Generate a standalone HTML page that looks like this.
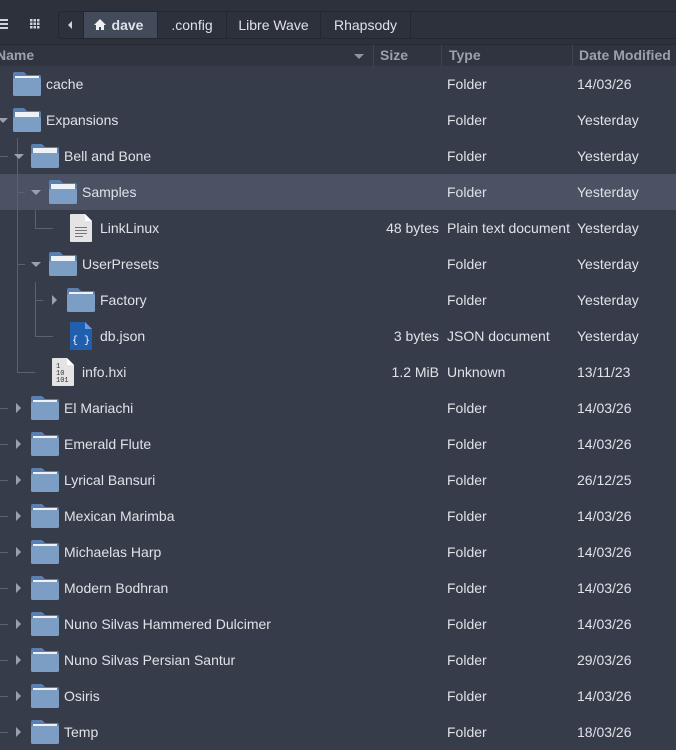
<!DOCTYPE html>
<html><head><meta charset="utf-8"><style>
*{margin:0;padding:0;box-sizing:border-box}
body{width:676px;height:748px;overflow:hidden;background:#373c4a;font-family:"Liberation Sans","DejaVu Sans",sans-serif;font-size:14px;color:#dfe2e8;position:relative}
.top{position:absolute;left:0;top:0;width:676px;height:44px;background:#2d313b}
.crumb{position:absolute;left:58px;top:11px;width:630px;height:28px;border:1px solid #232730;border-radius:4px;background:#2d313b}
.seg{position:absolute;top:0;height:26px;line-height:26px;border-right:1px solid #23272f;text-align:center;color:#dfe2e8}
.hdr{position:absolute;left:0;top:44px;width:676px;height:22px;background:#2f3440;border-top:1px solid #262a33;color:#9aa1ad;font-weight:bold;font-size:14px}
.hdr span{position:absolute;top:2px}
.hs{position:absolute;top:0;width:1px;height:22px;background:#3e4450}
.row{position:absolute;left:0;width:676px;height:36px}
.sel{background:#4a5264}
.t{position:absolute;top:10px;white-space:nowrap}
.f{position:absolute;top:6px}
.ty{left:447px}.dt{left:577px}
.sz{right:237px;text-align:right}
.ln{position:absolute;background:#5b6170}
.chd{position:absolute;top:16px;width:0;height:0;border-left:5px solid transparent;border-right:5px solid transparent;border-top:5px solid #9aa1ad}
.chr{position:absolute;top:13px;width:0;height:0;border-top:5px solid transparent;border-bottom:5px solid transparent;border-left:5px solid #9aa1ad}
</style></head><body>
<svg width="0" height="0" style="position:absolute"><defs>
<symbol id="fc" viewBox="0 0 28 24"><path d="M0 2a2 2 0 0 1 2-2h9l3 3h12a2 2 0 0 1 2 2v4H0z" fill="#5b80b0"/><rect x="2" y="4" width="24" height="3" fill="#eef1f5"/><rect x="0" y="6" width="28" height="18" rx="1.5" fill="#7c9dc4"/></symbol>
<symbol id="fo" viewBox="0 0 28 24"><path d="M0 2a2 2 0 0 1 2-2h9l3 3h12a2 2 0 0 1 2 2v6H0z" fill="#5b80b0"/><rect x="2" y="4" width="24" height="7" fill="#eef1f5"/><rect x="0" y="9" width="28" height="15" rx="1.5" fill="#7c9dc4"/></symbol>
</defs></svg>
<div class="top">
<div style="position:absolute;left:0;top:19px;width:8px;height:2px;background:#cfd3da;box-shadow:0 4px #cfd3da,0 8px #cfd3da"></div>
<svg style="position:absolute;left:30px;top:19px" width="10" height="10"><g fill="#cfd3da"><rect x="0" y="0" width="2.5" height="2.5"/><rect x="3.5" y="0" width="2.5" height="2.5"/><rect x="7" y="0" width="2.5" height="2.5"/><rect x="0" y="3.5" width="2.5" height="2.5"/><rect x="3.5" y="3.5" width="2.5" height="2.5"/><rect x="7" y="3.5" width="2.5" height="2.5"/><rect x="0" y="7" width="2.5" height="2.5"/><rect x="3.5" y="7" width="2.5" height="2.5"/><rect x="7" y="7" width="2.5" height="2.5"/></g></svg>
<div class="crumb">
<div class="seg" style="left:0;width:25px"><div style="position:absolute;left:9px;top:9px;border-top:4px solid transparent;border-bottom:4px solid transparent;border-right:4px solid #cfd3da"></div></div>
<div class="seg" style="left:25px;width:74px;background:#434a5a;font-weight:bold;padding-left:14px">dave<svg style="position:absolute;left:10px;top:7px" width="12" height="11"><path d="M6 0L0 6h2v5h3V8h2v3h3V6h2z" fill="#eef0f3"/></svg></div>
<div class="seg" style="left:99px;width:69px">.config</div>
<div class="seg" style="left:168px;width:94px">Libre Wave</div>
<div class="seg" style="left:262px;width:90px">Rhapsody</div>
</div>
</div>
<div class="hdr">
<span style="left:-4px">Name</span>
<div style="position:absolute;left:354px;top:9px;border-left:5px solid transparent;border-right:5px solid transparent;border-top:5px solid #8e95a1"></div>
<div class="hs" style="left:373px"></div><span style="left:380px">Size</span>
<div class="hs" style="left:441px"></div><span style="left:449px">Type</span>
<div class="hs" style="left:572px"></div><span style="left:579px">Date Modified</span>
</div>

<div class="ln" style="left:17px;top:138px;width:1px;height:234px"></div>
<div class="ln" style="left:17px;top:192px;width:8px;height:1px"></div>
<div class="ln" style="left:17px;top:264px;width:8px;height:1px"></div>
<div class="ln" style="left:17px;top:372px;width:18px;height:1px"></div>
<div class="ln" style="left:35px;top:210px;width:1px;height:18px"></div>
<div class="ln" style="left:35px;top:228px;width:18px;height:1px"></div>
<div class="ln" style="left:35px;top:282px;width:1px;height:54px"></div>
<div class="ln" style="left:35px;top:300px;width:8px;height:1px"></div>
<div class="ln" style="left:35px;top:336px;width:18px;height:1px"></div>

<div class="row" style="top:66px"><svg class="f" style="left:13px" width="28" height="24"><use href="#fc"/></svg><span class="t" style="left:46px">cache</span><span class="t ty">Folder</span><span class="t dt">14/03/26</span></div>
<div class="row" style="top:102px"><div class="chd" style="left:-2px"></div><svg class="f" style="left:13px" width="28" height="24"><use href="#fo"/></svg><span class="t" style="left:46px">Expansions</span><span class="t ty">Folder</span><span class="t dt">Yesterday</span></div>
<div class="row" style="top:138px"><div class="ln" style="left:0;top:18px;width:8px;height:1px"></div><div class="chd" style="left:14px"></div><svg class="f" style="left:31px" width="28" height="24"><use href="#fo"/></svg><span class="t" style="left:64px">Bell and Bone</span><span class="t ty">Folder</span><span class="t dt">Yesterday</span></div>
<div class="row sel" style="top:174px"><div class="ln" style="left:17px;top:0;width:1px;height:36px"></div><div class="ln" style="left:17px;top:18px;width:8px;height:1px"></div><div class="chd" style="left:31px"></div><svg class="f" style="left:49px" width="28" height="24"><use href="#fo"/></svg><span class="t" style="left:82px">Samples</span><span class="t ty">Folder</span><span class="t dt">Yesterday</span></div>
<div class="row" style="top:210px"><svg class="f" style="left:70px;top:4px" width="22" height="28"><path d="M1 0h14l7 7v20a1 1 0 0 1-1 1H1a1 1 0 0 1-1-1V1a1 1 0 0 1 1-1z" fill="#e4e4e4"/><path d="M15 0l7 7h-7z" fill="#fff"/><g fill="#777"><rect x="5" y="13" width="12" height="1"/><rect x="5" y="16" width="12" height="1"/><rect x="5" y="19" width="12" height="1"/><rect x="5" y="22" width="8" height="1"/></g></svg><span class="t" style="left:100px">LinkLinux</span><span class="t sz">48 bytes</span><span class="t ty">Plain text document</span><span class="t dt">Yesterday</span></div>
<div class="row" style="top:246px"><div class="chd" style="left:31px"></div><svg class="f" style="left:49px" width="28" height="24"><use href="#fo"/></svg><span class="t" style="left:82px">UserPresets</span><span class="t ty">Folder</span><span class="t dt">Yesterday</span></div>
<div class="row" style="top:282px"><div class="chr" style="left:52px"></div><svg class="f" style="left:67px" width="28" height="24"><use href="#fc"/></svg><span class="t" style="left:100px">Factory</span><span class="t ty">Folder</span><span class="t dt">Yesterday</span></div>
<div class="row" style="top:318px"><svg class="f" style="left:70px;top:4px" width="22" height="28"><path d="M1 0h14l7 7v20a1 1 0 0 1-1 1H1a1 1 0 0 1-1-1V1a1 1 0 0 1 1-1z" fill="#1f5fae"/><path d="M15 0l7 7h-7z" fill="#6b9be0"/><text x="11" y="21" font-family="Liberation Mono,monospace" font-size="10" fill="#fff" text-anchor="middle">{ }</text></svg><span class="t" style="left:100px">db.json</span><span class="t sz">3 bytes</span><span class="t ty">JSON document</span><span class="t dt">Yesterday</span></div>
<div class="row" style="top:354px"><svg class="f" style="left:52px;top:4px" width="22" height="28"><path d="M1 0h14l7 7v20a1 1 0 0 1-1 1H1a1 1 0 0 1-1-1V1a1 1 0 0 1 1-1z" fill="#e4e4e4"/><path d="M15 0l7 7h-7z" fill="#fff"/><text x="4" y="10" font-family="Liberation Mono,monospace" font-size="7" fill="#333">1</text><text x="4" y="17" font-family="Liberation Mono,monospace" font-size="7" fill="#333">10</text><text x="4" y="24" font-family="Liberation Mono,monospace" font-size="7" fill="#333">101</text></svg><span class="t" style="left:82px">info.hxi</span><span class="t sz">1.2 MiB</span><span class="t ty">Unknown</span><span class="t dt">13/11/23</span></div>

<div class="row" style="top:390px"><div class="ln" style="left:0;top:18px;width:8px;height:1px"></div><div class="chr" style="left:16px"></div><svg class="f" style="left:31px" width="28" height="24"><use href="#fc"/></svg><span class="t" style="left:64px">El Mariachi</span><span class="t ty">Folder</span><span class="t dt">14/03/26</span></div>
<div class="row" style="top:426px"><div class="ln" style="left:0;top:18px;width:8px;height:1px"></div><div class="chr" style="left:16px"></div><svg class="f" style="left:31px" width="28" height="24"><use href="#fc"/></svg><span class="t" style="left:64px">Emerald Flute</span><span class="t ty">Folder</span><span class="t dt">14/03/26</span></div>
<div class="row" style="top:462px"><div class="ln" style="left:0;top:18px;width:8px;height:1px"></div><div class="chr" style="left:16px"></div><svg class="f" style="left:31px" width="28" height="24"><use href="#fc"/></svg><span class="t" style="left:64px">Lyrical Bansuri</span><span class="t ty">Folder</span><span class="t dt">26/12/25</span></div>
<div class="row" style="top:498px"><div class="ln" style="left:0;top:18px;width:8px;height:1px"></div><div class="chr" style="left:16px"></div><svg class="f" style="left:31px" width="28" height="24"><use href="#fc"/></svg><span class="t" style="left:64px">Mexican Marimba</span><span class="t ty">Folder</span><span class="t dt">14/03/26</span></div>
<div class="row" style="top:534px"><div class="ln" style="left:0;top:18px;width:8px;height:1px"></div><div class="chr" style="left:16px"></div><svg class="f" style="left:31px" width="28" height="24"><use href="#fc"/></svg><span class="t" style="left:64px">Michaelas Harp</span><span class="t ty">Folder</span><span class="t dt">14/03/26</span></div>
<div class="row" style="top:570px"><div class="ln" style="left:0;top:18px;width:8px;height:1px"></div><div class="chr" style="left:16px"></div><svg class="f" style="left:31px" width="28" height="24"><use href="#fc"/></svg><span class="t" style="left:64px">Modern Bodhran</span><span class="t ty">Folder</span><span class="t dt">14/03/26</span></div>
<div class="row" style="top:606px"><div class="ln" style="left:0;top:18px;width:8px;height:1px"></div><div class="chr" style="left:16px"></div><svg class="f" style="left:31px" width="28" height="24"><use href="#fc"/></svg><span class="t" style="left:64px">Nuno Silvas Hammered Dulcimer</span><span class="t ty">Folder</span><span class="t dt">14/03/26</span></div>
<div class="row" style="top:642px"><div class="ln" style="left:0;top:18px;width:8px;height:1px"></div><div class="chr" style="left:16px"></div><svg class="f" style="left:31px" width="28" height="24"><use href="#fc"/></svg><span class="t" style="left:64px">Nuno Silvas Persian Santur</span><span class="t ty">Folder</span><span class="t dt">29/03/26</span></div>
<div class="row" style="top:678px"><div class="ln" style="left:0;top:18px;width:8px;height:1px"></div><div class="chr" style="left:16px"></div><svg class="f" style="left:31px" width="28" height="24"><use href="#fc"/></svg><span class="t" style="left:64px">Osiris</span><span class="t ty">Folder</span><span class="t dt">14/03/26</span></div>
<div class="row" style="top:714px"><div class="ln" style="left:0;top:18px;width:8px;height:1px"></div><div class="chr" style="left:16px"></div><svg class="f" style="left:31px" width="28" height="24"><use href="#fc"/></svg><span class="t" style="left:64px">Temp</span><span class="t ty">Folder</span><span class="t dt">18/03/26</span></div>
</body></html>
